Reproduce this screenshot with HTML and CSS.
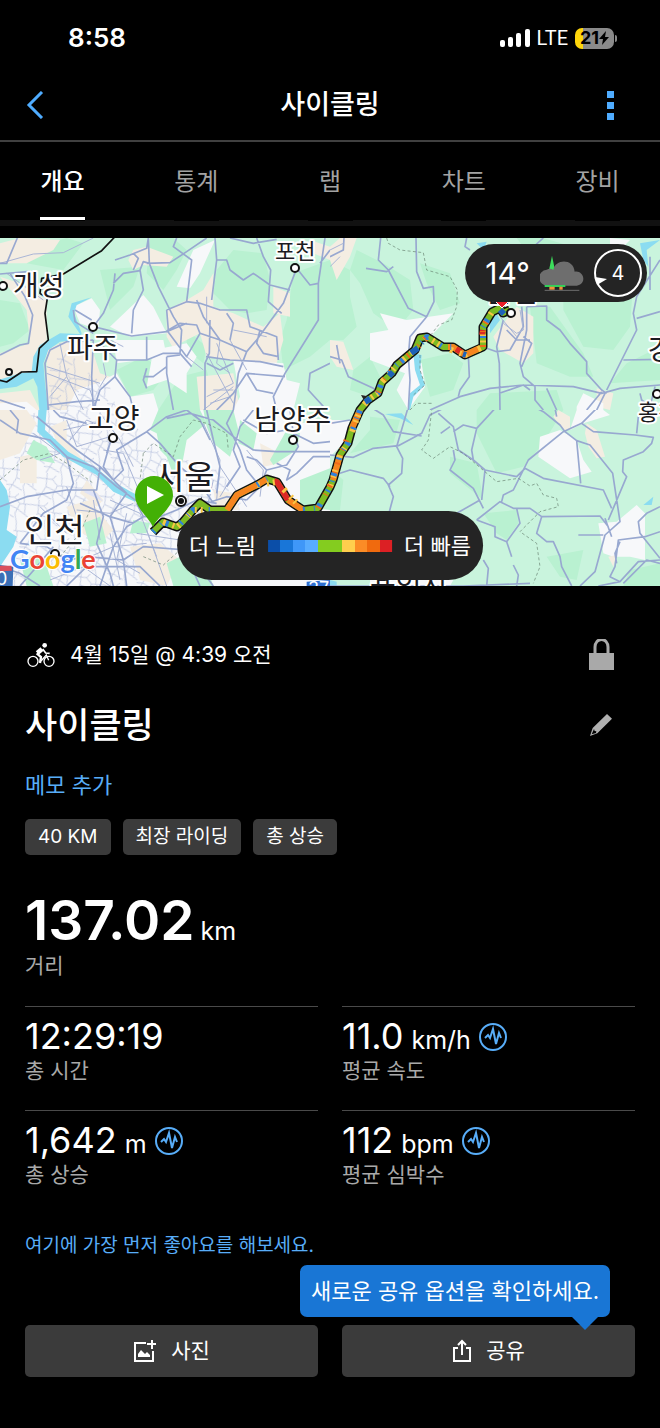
FILE: index.html
```html
<!DOCTYPE html>
<html lang="ko">
<head>
  <meta charset="UTF-8">
  <meta name="viewport" content="width=device-width, initial-scale=1.0">
  <title>사이클링</title>
  <link rel="stylesheet" href="styles.css">
</head>
<body>
  <div class="status-bar">
    <span class="time">8:58</span>
    <div class="status-icons">
      <svg width="30" height="20" viewBox="0 0 30 20" fill="#fff">
        <rect x="0" y="12" width="5" height="7" rx="2"/>
        <rect x="8" y="9" width="5" height="10" rx="2"/>
        <rect x="16" y="5" width="5" height="14" rx="2"/>
        <rect x="25" y="1" width="5" height="18" rx="2"/>
      </svg>
      <span class="network">LTE</span>
      <div class="battery">
        <span>21</span>
        <svg width="10" height="14" viewBox="0 0 10 14"><path d="M7 0L0 8h4L3 14l7-8H6z"/></svg>
      </div>
    </div>
  </div>

  <header class="navbar">
    <button class="icon-btn" aria-label="뒤로">
      <svg width="18" height="28" viewBox="0 0 18 28" fill="none" stroke="#4facff" stroke-width="3"><path d="M16 1L3 14l13 13"/></svg>
    </button>
    <h1>사이클링</h1>
    <button class="icon-btn more" aria-label="더 보기">
      <svg width="8" height="30" viewBox="0 0 8 30" fill="#4facff"><path d="M0 1h7v7H0zM0 12h7v7H0zM0 23h7v7H0z"/></svg>
    </button>
  </header>

  <nav class="tabs">
    <a href="#" class="active">개요</a>
    <a href="#">통계</a>
    <a href="#">랩</a>
    <a href="#">차트</a>
    <a href="#">장비</a>
  </nav>

  <div class="map">
    <svg class="map-canvas" viewBox="0 0 660 348" preserveAspectRatio="xMidYMid slice">
      <defs>
        <pattern id="streets" width="46" height="42" patternUnits="userSpaceOnUse" patternTransform="rotate(17) scale(2)">
          <path d="M0 10L18 7L28 14L46 10M8 0L12 20L6 42M28 14L25 30L31 42M12 20L25 22L46 30M18 7L22 0M36 12L39 26M0 34L9 32L25 36M31 0L34 12" fill="none" stroke="#b4bfdc" stroke-width="1"/>
        </pattern>
      </defs>
      <rect width="660" height="348" fill="#c9f4dd"/>

      <!-- north west -->
      <svg width="330" height="172" viewBox="0 24 990 516">
        <path class="wood" d="M650 120L700 60L790 70L810 150L800 240L740 250L690 240L640 190ZM520 24L560 60L530 120L490 180L440 130L450 24ZM350 420L430 380L500 430L460 480L390 500ZM540 440L620 420L640 500L600 540L475 540ZM880 130L990 90L990 330L930 380L850 420L840 330L860 270ZM0 210L60 220L90 300L40 340L0 350ZM200 24L250 40L190 120L80 100L60 60ZM300 120L420 110L400 170L330 240ZM560 300L620 350L610 400L560 360Z"/>
        <path class="land" d="M0 40L60 24L180 30L160 60L80 100L0 100ZM0 140L60 160L140 210L140 330L110 370L90 440L0 450L0 370L90 340L80 240ZM400 60L440 50L520 80L500 110L430 105L400 120L385 90ZM500 240L560 210L610 180L640 130L640 230L700 250L790 290L840 250L850 330L830 400L740 400L620 380L600 310L540 340L540 390L500 320ZM140 360L200 330L270 340L300 430L330 440L280 540L140 540ZM590 440L700 430L720 540L600 540ZM930 30L990 50L990 90L940 70ZM820 170L870 190L870 260L820 250ZM0 490L90 480L120 540L0 540Z"/>
        <path class="city" d="M580 60L645 30L600 130L570 175L530 170ZM220 230L275 205L300 240L295 300L240 280ZM330 290L430 195L460 230L500 310L390 320ZM460 360L560 340L590 380L560 430L560 490L500 450L440 470ZM700 390L850 400L860 450L900 460L880 540L700 540L720 500ZM340 330L490 330L500 380L350 400ZM290 460L350 430L390 500L460 490L475 540L200 540L230 480ZM0 520L80 515L110 540L0 540Z"/>
        <path d="M150 400L200 360L280 440L330 470L350 540L145 540Z" fill="url(#streets)"/>
        <path class="water" d="M-5 450L60 430L95 425L100 380L120 345L180 310L240 312L205 260L215 220L275 202L230 225L222 250L245 310L240 330L180 335L145 360L130 400L135 460L145 540L118 540L112 470L100 445L50 470L-5 478Z"/>
        <path class="road-minor" d="M0 100L100 72L190 68L280 24M20 130L130 210M80 130L130 180M140 430L270 480L290 540M180 340L200 440L150 500M140 410L300 460M200 440L250 540M650 340L700 460L620 500M640 480L700 480M620 370L700 520M660 330L650 400L690 430M610 540L700 470M630 520L690 500M330 330L370 350M310 400L318 440L300 470M700 300L800 320M690 330L740 420M620 200L620 280M560 380L610 420"/>
        <path class="road" d="M0 100L20 100L52 24M0 132L90 124M0 375L60 345L85 340L98 255L75 200L30 130M345 90L390 75L440 55L445 24M445 24L448 100L475 170L520 260L545 300L540 370L575 410M440 100L510 98L560 65L620 24M448 100L430 95L420 120L430 180L400 240L395 310M400 120L415 85L400 70M345 130L340 180L310 250L280 290M420 122L370 130L340 160M500 240L560 215L600 220L660 240L740 240L750 290L830 320L835 390M560 215L575 90L520 50L530 24M500 240L505 300L540 280L590 285L600 310L660 330L740 365L770 330L850 220L890 115L930 165L955 160L975 24M955 160L955 270L880 390L855 430L820 500L830 540M645 24L650 90L635 210M650 90L680 90L690 120L730 150L760 130L810 165L870 180M770 24L790 80L812 120L805 215L845 250M690 24L760 40L830 28M630 270L628 370L615 400L615 540M618 380L690 390L780 395L850 410M740 365L715 430L700 540M780 300L770 340L790 370L835 380M600 310L560 380L500 300M500 380L540 375M280 290L395 318L500 305L560 280M300 340L350 390L345 440L390 500L400 540M280 330L275 440L280 540M350 390L440 390L490 370L540 370M440 320L440 390M500 380L500 430L520 540M440 415L430 450L440 475M500 410L460 440L430 440M145 540L135 400L150 360L200 335L280 330M145 525L230 515L300 510M345 440L300 480L280 540M620 400L660 420L700 400M650 540L700 490L740 430L855 440M740 430L770 480L820 490M990 400L930 430L925 480L980 540M990 60L960 100M220 240L225 275L280 310M225 240L275 270M590 210L610 260L660 330M680 250L700 280L690 330M0 510L75 535"/>
        <path class="border" d="M-5 450L20 456L65 426L110 425L118 355L145 330L135 250L142 205L120 190L125 145L190 132L305 62L345 20"/>
      </svg>

      <!-- north east -->
      <svg x="330" width="330" height="172" viewBox="0 24 990 516">
        <path class="wood" d="M80 60L160 100L240 150L250 240L200 300L130 250L90 160L60 120ZM270 100L360 130L390 220L330 240L290 160ZM0 90L60 120L60 200L80 290L40 330L0 330ZM270 390L360 370L400 400L370 480L300 500ZM600 230L660 230L760 370L790 440L720 440L620 400ZM560 24L640 24L760 60L700 90L580 50ZM120 380L160 460L120 500L60 480L70 420ZM700 120L910 150L900 290L850 360L760 350L700 240ZM890 400L990 350L990 450L840 460ZM440 540L480 490L680 480L700 540Z"/>
        <path class="land" d="M0 50L30 24L80 24L60 80L20 150L0 90ZM0 330L40 335L70 420L20 410L0 380ZM520 280L560 230L610 260L610 370L580 400L510 360L490 320ZM800 475L850 490L840 540L800 530Z"/>
        <path class="city" d="M120 310L175 300L150 250L230 270L370 250L300 320L270 330L245 370L275 400L285 470L235 540L200 480L225 430L120 390ZM740 530L760 490L820 520L820 540L740 540ZM840 24L900 30L870 60L840 50Z"/>
        <path class="water" d="M250 370L275 375L270 420L285 465L250 500L240 540L235 540L240 490L270 465L255 420ZM480 270L500 250L510 270L480 310ZM930 40L990 30L950 60L955 110L940 90ZM440 40L470 35L460 60Z"/>
        <path class="road" d="M152 24L145 90L175 120L235 235L290 260L240 320L235 380L240 450L235 540M258 24L260 125L280 175L310 170L312 215L290 260M108 115L170 125L190 110M410 24L405 50L420 60M0 80L40 60L42 24M0 380L35 390L55 440L130 475L150 490M20 345L30 400M415 375L418 440L390 480L385 500M300 540L390 500L480 475L580 465L730 470L815 490L870 475L990 465M520 270L500 350L508 400L510 540M575 230L580 290L540 360L500 365L470 355M590 230L590 300L570 400L580 440L615 470L615 510L640 540M590 230L650 228L650 270L690 300L720 340L770 395L770 430L815 480L830 490M830 480L920 300L910 250L920 200L990 90M815 485L770 540M825 490L800 540M880 390L990 388M930 490L935 510L960 530L975 470M920 265L990 245M960 80L960 180M508 490L580 465L600 480M650 475L680 540M580 320L605 340L575 410M530 300L560 330L600 330M600 60L640 24"/>
        <path class="road-minor" d="M570 240L580 300L560 310L520 280M510 260L560 320M0 60L40 40M0 110L30 80"/>
        <path class="trail" d="M170 24L175 40L210 60L280 68L290 120L360 140L382 180L380 230L365 270L325 285L305 312M270 375L270 420L285 465L250 495M240 540L260 520L305 520"/>
      </svg>

      <!-- south west -->
      <svg y="172" width="330" height="176" viewBox="0 30 990 528">
        <path class="city" d="M0 30H880L900 70L990 60V558H0Z"/>
        <path d="M145 30L360 30L500 180L620 180L740 300L560 558L40 558L40 380L0 250L0 60Z" fill="url(#streets)"/>
        <path class="land" d="M0 30L80 30L110 70L60 160L0 180ZM150 80L200 60L200 120L250 180L200 190ZM60 170L110 160L110 250L60 250ZM200 320L270 300L340 390L300 430L230 390ZM640 270L700 280L720 330L650 330ZM780 130L820 150L840 190L790 200ZM390 440L480 430L540 480L500 558L420 540ZM560 30L600 30L590 70L540 60ZM260 240L310 300L290 320L240 280Z"/>
        <path class="wood" d="M475 30L600 30L620 70L560 120L545 200L520 225L500 170L480 150L470 100L450 90ZM610 30L700 30L715 90L690 170L640 130L620 80ZM100 120L140 140L165 190L110 180L80 160ZM250 370L300 350L320 430L270 440ZM900 240L990 205L990 330L900 320ZM860 90L900 100L890 150L820 195L810 180ZM500 490L600 440L640 558L520 558ZM400 360L450 370L440 400L390 400ZM720 60L770 100L760 150L715 130ZM60 480L130 470L160 558L80 558Z"/>
        <path class="water" d="M115 30L140 30L135 90L205 155L290 205L340 245L410 285L405 305L340 275L290 225L190 170L112 95ZM0 240L20 270L30 320L20 390L50 410L40 440L0 500Z"/>
        <path d="M290 280L310 305L250 275L265 270Z" fill="#dfe3f6"/>
        <path class="road-minor" d="M200 60L230 140L330 110M190 90L280 70M210 120L260 60L330 90M100 100L180 160L120 180M300 40L360 120L400 200M310 150L370 160L420 280M230 330L330 340L400 310M280 300L300 420M330 300L420 340L470 470M330 400L360 540M380 340L350 480L420 520M270 470L340 440L440 430M410 400L540 420L560 470M440 390L500 558M610 70L660 180L650 300M660 200L740 320M690 240L660 290M740 150L790 210L780 290M120 320L200 400M200 260L240 380M150 540L250 500L330 558M620 330L640 240"/>
        <path class="road" d="M0 60L60 100L150 120L200 170L280 200L350 260L420 310L480 340M30 30L55 60L50 100M110 50L230 150L300 200L380 280M0 320L80 290L200 270L290 270L300 200M200 170L220 250L200 300L130 340L60 430M160 30L180 50L260 70M330 130L310 200L340 240L370 210L350 150L440 95L500 50L560 30M340 100L320 160M440 95L480 130L540 200L600 250L640 310M500 55L570 40L640 60L700 110L760 150L830 155L990 155M700 30L680 70L720 150L740 210L780 260M620 30L640 120L660 200L650 280M560 30L600 60L630 120M760 30L720 80L700 150L720 200L680 260M730 60L800 100L860 90L940 130L990 125M870 30L880 100L895 140L860 195L800 210L780 260L740 300M830 190L870 210L860 240L890 220L940 170L990 170M280 270L310 350L290 430L330 520L340 558M60 430L140 440L200 480L260 470L370 480L430 440L560 450L640 558M410 310L430 350L380 380L340 440L300 558M430 350L480 350L530 330L590 300L650 310M240 310L330 350L400 370M160 440L110 500L60 558M200 558L260 500L420 500L480 558M380 280L330 350L370 480L380 558M740 300L680 290L620 310M800 210L770 180L740 170M540 410L560 470L600 558M0 500L60 520L120 558"/>
        <path class="trail" d="M0 240L70 180L150 160L200 190L280 250M430 160L460 130L520 170L540 110L580 60L620 70L680 100L685 150M430 160L420 240M180 470L240 400L270 330M430 470L490 495L540 450"/>
        <path d="M0 495L40 500L38 558L0 558Z" fill="#3b6fb6"/>
        <path d="M0 497L34 497L36 512L0 514Z" fill="#d9505c"/>
        <path d="M920 545L990 540L990 558L920 558Z" fill="#2f6fd0"/>
      </svg>

      <!-- south east -->
      <svg x="330" y="172" width="330" height="176" viewBox="0 30 990 528">
        <path class="wood" d="M360 170L440 190L460 300L360 220ZM460 340L560 330L565 370L530 420L500 400ZM650 470L760 450L740 540L690 530ZM700 30L440 30L440 100L500 220L580 200L640 130ZM120 50L210 60L190 130L60 160L120 90ZM0 205L40 240L30 330L0 330ZM900 510L990 490L990 558L880 558Z"/>
        <path class="city" d="M0 60L60 60L40 130L0 170ZM740 30H820L840 45L760 70L720 90ZM630 110L690 90L740 120L760 180L785 215L720 235L625 170ZM805 370L860 365L920 315L945 340L945 480L900 470L850 470L820 460ZM120 540L370 540L360 558L120 558Z"/>
        <path class="land" d="M685 30L720 50L720 90L700 90L670 50ZM770 70L800 90L825 170L800 175L775 140L765 100ZM835 470L860 465L850 500Z"/>
        <path class="water" d="M165 42L215 40L250 75L210 55ZM940 315L970 290L965 315ZM0 540L20 545L20 558L0 558Z"/>
        <path class="road" d="M0 165L70 172L130 145L205 137L275 100L300 45L390 0M0 70L60 60M120 20L160 45L190 95L275 108M235 20L200 140L218 175L215 220L175 255L190 290L178 335M30 220L60 210L160 235L180 260M325 40L370 80L385 150L430 180L465 210L560 230L585 205L640 235L820 270L845 325M370 95L400 75L440 85L500 20M440 85L425 150L430 180M370 150L375 180L360 210L430 265L460 325M465 210L455 300M332 100L360 80M380 340L450 300M440 360L510 305L550 325L600 325L635 350L810 348L835 380M745 405L820 405M515 305L520 285L550 270L595 180L700 95L755 70L805 20M610 20L640 35L690 75L705 95L740 122L780 135L848 220L870 365L825 405L795 515L750 558M740 122L752 250M755 70L790 95L915 105L970 112L965 130L940 155L880 180L878 215L890 230L835 360M920 100L925 50M825 355L845 410M440 360L495 380L495 410L530 425L570 370L560 325M530 425L545 470M635 350L620 400L650 425L670 425L690 470L695 500L725 558M550 495L565 525L560 558M460 480L475 505L470 558M0 558L400 558L600 550M805 558L870 545L925 485L990 480M870 545L840 530L855 500L865 420L945 410L990 395M870 425L855 460L860 490M990 320L950 340L925 365L930 400L990 475M880 550L950 480L990 490M670 0L680 50"/>
        <path class="trail" d="M240 10L250 22L300 10L305 30L295 120L275 150L310 175L360 140L400 160L500 245L565 235L600 258L620 250L640 285L680 295L685 320L630 335L570 395L620 430L630 500L610 550"/>
      </svg>

      <!-- activity track -->
      <g fill="none" stroke-linejoin="round">
        <path stroke="#111" stroke-width="9" d="M153 294L163 284L177 289L183 284L193 272L200 265L210 272L227 272L237 257L257 247L267 241L277 244L288 262L303 272L318 270L330 249L333 242L340 217L348 205L352 190L360 172L368 162L378 155L382 144L392 135L397 127L415 112L420 100L427 99L443 109L453 109L465 117L483 109L483 89L492 74L500 70L503 75L510 72"/>
        <path d="M189 271L202 259L200 269ZM361 157L372 159L366 166Z" fill="#222"/>
        <g stroke-width="6">
          <path stroke="#7dbb24" d="M153 294L163 284L177 289L183 284L193 272L200 265L210 272L227 272L237 257L257 247L267 241L277 244L288 262L303 272L318 270L330 249L333 242L340 217L348 205L352 190L360 172L368 162L378 155L382 144L392 135L397 127L415 112L420 100L427 99L443 109L453 109L465 117L483 109L483 89L492 74L500 70L503 75L510 72"/>
          <path stroke="#f6851f" d="M227 272L237 257L257 247L267 241M288 262L303 272M333 242L340 217M352 190L360 172M448 109L453 109L465 117L480 110"/>
          <path stroke="#dc2a25" d="M274 243L277 244L288 262M482 97L483 92M456 111L461 114"/>
          <path stroke="#f9c545" stroke-dasharray="3 7 2 4 2 12" d="M163 284L177 289L183 284L193 272L210 272M257 247L277 244L303 272M330 249L340 217L348 205L360 172L368 162L378 155L382 144L397 127L415 112L427 99L443 109L465 117L483 109L483 89L492 74"/>
          <path stroke="#ef6a1a" stroke-dasharray="2 13 1 8" d="M318 270L333 242L340 217L352 190M378 155L382 144L397 127L415 112L427 99M483 109L483 89L492 74"/>
          <path stroke="#2f80dc" stroke-dasharray="2 9 1 5 3 14" d="M153 294L163 284L177 289L193 272L210 272M257 247L267 241M303 272L318 270L330 249L340 217L348 205L360 172L368 162L378 155L382 144L397 127L415 112L427 99L443 109L453 109M483 100L483 89L492 74"/>
          <path stroke="#1e62b8" d="M365 164L370 161M389 138L393 134M411 115L418 110M463 116L466 117M500 72L504 76"/>
        </g>
      </g>

      <g class="place-dots">
        <circle cx="295" cy="30" r="4"/><circle cx="3" cy="48" r="4"/>
        <circle cx="93" cy="89" r="4"/><circle cx="9" cy="134" r="3"/>
        <circle cx="113" cy="200" r="4"/><circle cx="293" cy="202" r="4"/>
        <circle cx="55" cy="316" r="4"/><circle cx="511" cy="75" r="4"/>
        <circle cx="657" cy="156" r="4"/><circle cx="181" cy="263" r="5"/>
      </g>
      <circle cx="181" cy="263" r="3" fill="#111"/>
      <g class="places">
        <text class="sm" x="275" y="21">포천</text>
        <text x="13" y="58">개성</text>
        <text x="67" y="120">파주</text>
        <text x="88" y="191">고양</text>
        <text x="254" y="192">남양주</text>
        <text class="lg" x="154" y="251">서울</text>
        <text class="lg" x="24" y="304">인천</text>
        <text x="486" y="64">춘천</text>
        <text x="648" y="122">강릉</text>
        <text class="sm" x="638" y="182">홍천</text>
        <text x="370" y="357">용인시</text>
      </g>
      <text class="shield" x="-4" y="347">0</text>
      <text class="shield" x="308" y="357">37</text>

      <!-- start and end pins -->
      <path d="M153 289C148 278 135 270 135 257A19 19 0 0 1 173 257C173 270 158 278 153 289Z" fill="#43b005"/>
      <path d="M147 248L164 257L147 266Z" fill="#fff"/>
      <path d="M495 63H509L502 70Z" fill="#e8202a" stroke="#fff"/>

      <text class="google" x="10" y="331"><tspan fill="#4285f4">G</tspan><tspan fill="#ea4335">o</tspan><tspan fill="#fbbc05">o</tspan><tspan fill="#4285f4">g</tspan><tspan fill="#34a853">l</tspan><tspan fill="#ea4335">e</tspan></text>
    </svg>

    <div class="weather">
      <span class="temp">14°</span>
      <svg width="44" height="36" viewBox="0 0 132 108">
        <path d="M26 50L36 2L46 50Z" fill="#3ddc5c"/>
        <path d="M24 92a24 24 0 0 1-4-48c8-4 15-3 20 1 5-33 60-36 64 5 14-3 26 8 26 21 0 14-12 21-24 21z" fill="#6e6e6e"/>
        <path d="M14 90h62v6H14z" fill="#30d158"/>
        <path d="M28 95h16v9H28zM58 95h10v9H58z" fill="#f0913a"/>
        <path d="M14 106H118" stroke="#6e6e6e" stroke-width="3"/>
      </svg>
      <div class="wind">
        <svg width="48" height="48" viewBox="0 0 48 48">
          <circle cx="24" cy="24" r="23" fill="none" stroke="#fff" stroke-width="2"/>
          <path d="M1 28L13 30L3 36Z" fill="#fff"/>
        </svg>
        <span>4</span>
      </div>
    </div>

    <div class="legend">
      <span>더 느림</span>
      <div class="scale"></div>
      <span>더 빠름</span>
    </div>
  </div>

  <main>
    <div class="meta">
      <svg width="28" height="24" viewBox="80 66 84 72" fill="none" stroke="#fff">
        <circle cx="98" cy="121" r="15" stroke-width="4"/>
        <circle cx="146" cy="121" r="15" stroke-width="4"/>
        <circle cx="133" cy="73" r="7" fill="#fff" stroke="none"/>
        <path d="M125 84L111 96" stroke-width="14"/>
        <path d="M109 97L122 108L119 126" stroke-width="7"/>
        <path d="M127 84L136 96L148 97" stroke-width="5"/>
        <path d="M122 120L138 102L145 118" stroke-width="4"/>
      </svg>
      <span class="date">4월 15일 @ 4:39 오전</span>
      <button class="icon-btn" aria-label="공개 범위">
        <svg width="25" height="32" viewBox="0 0 25 32">
          <rect y="14" width="25" height="17" fill="#a9a9a9"/>
          <path d="M6 15V8a6 7 0 0 1 13 0v7" fill="none" stroke="#a9a9a9" stroke-width="3"/>
        </svg>
      </button>
    </div>

    <div class="title">
      <h2>사이클링</h2>
      <button class="icon-btn" aria-label="이름 편집">
        <svg width="22" height="22" viewBox="0 0 66 66">
          <path d="M51 0L66 14L22 58L0 66L8 42ZM12 45L5 61L18 57L19 52L14 51Z" fill="#b0b0b0" fill-rule="evenodd"/>
        </svg>
      </button>
    </div>

    <a href="#" class="note">메모 추가</a>

    <div class="chips">
      <span>40 KM</span>
      <span>최장 라이딩</span>
      <span>총 상승</span>
    </div>

    <div class="distance">
      <div class="value">137.02 <small>km</small></div>
      <div class="label">거리</div>
    </div>

    <div class="stats">
      <div class="stat">
        <div class="value">12:29:19</div>
        <div class="label">총 시간</div>
      </div>
      <div class="stat">
        <div class="value">11.0 <small>km/h</small>
          <svg class="pulse" viewBox="0 0 28 28"><circle cx="14" cy="14" r="13"/><path d="M6 15l3-3 2 3 3-9 3 15 3-11 2 5"/></svg>
        </div>
        <div class="label">평균 속도</div>
      </div>
      <div class="stat">
        <div class="value">1,642 <small>m</small>
          <svg class="pulse" viewBox="0 0 28 28"><circle cx="14" cy="14" r="13"/><path d="M6 15l3-3 2 3 3-9 3 15 3-11 2 5"/></svg>
        </div>
        <div class="label">총 상승</div>
      </div>
      <div class="stat">
        <div class="value">112 <small>bpm</small>
          <svg class="pulse" viewBox="0 0 28 28"><circle cx="14" cy="14" r="13"/><path d="M6 15l3-3 2 3 3-9 3 15 3-11 2 5"/></svg>
        </div>
        <div class="label">평균 심박수</div>
      </div>
    </div>

    <a href="#" class="like">여기에 가장 먼저 좋아요를 해보세요.</a>

    <div class="actions">
      <button>
        <svg width="24" height="24" viewBox="0 0 24 24" fill="none" stroke="#fff" stroke-width="2">
          <path d="M13 4H2v18h18V12"/>
          <path d="M19 1v9M14 5h9" stroke-width="2"/>
          <path d="M5 18v-3l3-4 4 4 2-2 3 3v2z" fill="#fff" stroke="none"/>
        </svg>
        사진
      </button>
      <button>
        <svg width="20" height="24" viewBox="0 0 20 24" fill="none" stroke="#fff" stroke-width="2">
          <path d="M6 9H2v13h16V9h-4M10 16V3M6 6l4-4 4 4"/>
        </svg>
        공유
      </button>
      <div class="tooltip">새로운 공유 옵션을 확인하세요.</div>
    </div>
  </main>
</body>
</html>
```
FILE: styles.css
```css
* {
  box-sizing: border-box;
}
body {
  margin: 0;
  background-color: #000;
  color: #fff;
  font-family: Inter, "Noto Sans CJK KR", sans-serif;
  font-size: 21px;
  line-height: 24px;
}
a {
  text-decoration: none;
}
button {
  font: inherit;
  color: inherit;
  border: 0;
  cursor: pointer;
}
svg {
  display: block;
}
.icon-btn {
  background: none;
  padding: 0;
}

/* status bar */
.status-bar {
  display: flex;
  justify-content: space-between;
  align-items: center;
  height: 68px;
  padding: 8px 46px 0 68px;
}
.time {
  font-size: 26px;
  font-weight: 600;
}
.status-icons {
  display: flex;
  align-items: center;
  gap: 7px;
}
.network {
  font-family: Roboto, sans-serif;
  font-size: 20px;
}
.battery {
  position: relative;
  display: flex;
  align-items: center;
  justify-content: center;
  width: 39px;
  height: 21px;
  border-radius: 7px;
  background: linear-gradient(to right, #ffd60a 21%, #8a8a8a 21%);
  color: #000;
  font-size: 18px;
  font-weight: 700;
}
.battery::after {
  content: "";
  position: absolute;
  right: -3px;
  top: 7px;
  width: 2px;
  height: 7px;
  border-radius: 0 2px 2px 0;
  background-color: #8a8a8a;
}

/* header */
.navbar {
  display: grid;
  grid-template-columns: 1fr auto 1fr;
  align-items: center;
  height: 74px;
  padding: 2px 26px 0;
  border-bottom: 2px solid #404040;
}
.navbar .more {
  justify-self: end;
  margin-right: 19px;
}
.navbar h1 {
  margin: 0;
  font-size: 27px;
  font-weight: 500;
  line-height: 36px;
}
.tabs {
  display: flex;
  justify-content: space-between;
  height: 84px;
  padding: 0 40px;
  border-bottom: 6px solid #111;
}
.tabs a {
  min-width: 45px;
  height: 78px;
  text-align: center;
  font-size: 24px;
  line-height: 80px;
  color: #a3a3a3;
  box-shadow: 0 1px 0 #000;
}
.tabs a.active {
  color: #fff;
  font-weight: 500;
  border-bottom: 3px solid #fff;
}

/* map */
.map {
  position: relative;
  margin-top: 12px;
}
.map-canvas {
  width: 100%;
  height: 348px;
}
.wood {
  fill: #b9f1d1;
}
.land {
  fill: #f4ede2;
}
.city {
  fill: #f7f8fa;
}
.water {
  fill: #8bdcf1;
}
.road,
.road-minor,
.border,
.trail {
  fill: none;
  stroke: #98a8d0;
  stroke-width: 5;
  stroke-linejoin: round;
}
.road-minor {
  stroke: #a9b5d6;
  stroke-width: 3;
}
.border {
  stroke: #111;
}
.trail {
  stroke: #67806f;
  stroke-width: 2;
  stroke-dasharray: 9 7;
}
.place-dots {
  fill: #fff;
  stroke: #111;
  stroke-width: 2;
}
.places,
.google {
  stroke: #fff;
  stroke-width: 4px;
  stroke-linejoin: round;
  paint-order: stroke;
}
.places {
  fill: #1c1c22;
  font-size: 28px;
}
.places .sm {
  font-size: 22px;
}
.places .lg {
  font-size: 33px;
}
.google {
  font-family: Lato, sans-serif;
  font-size: 27px;
  font-weight: 700;
  stroke-width: 2px;
}
.shield {
  fill: #fff;
  font-size: 18px;
}
.weather,
.legend {
  position: absolute;
  display: flex;
  align-items: center;
  background-color: #242424;
}
.weather {
  top: 6px;
  right: 13px;
  gap: 10px;
  height: 58px;
  padding: 0 5px 0 20px;
  border-radius: 29px;
}
.temp {
  font-size: 30px;
}
.wind {
  position: relative;
}
.wind span {
  position: absolute;
  inset: 0;
  text-align: center;
  font-size: 20px;
  line-height: 48px;
}
.legend {
  bottom: 6px;
  left: 50%;
  transform: translateX(-50%);
  gap: 12px;
  height: 69px;
  padding: 0 12px;
  border-radius: 35px;
  font-size: 22px;
  white-space: nowrap;
}
.scale {
  width: 124px;
  height: 12px;
  background: linear-gradient(to right,
    #0b4ea8 10%, #1976d8 10% 20%, #3f97f8 20% 30%, #58acff 30% 40%,
    #84cc1f 40% 60%, #ffce4d 60% 70%, #fb8c26 70% 80%, #f06a0e 80% 90%, #dc2024 90%);
}

/* details */
main {
  padding: 53px 25px 51px;
}
.meta,
.title {
  display: flex;
  align-items: center;
}
.meta {
  height: 32px;
  padding: 0 21px 0 2px;
}
.date {
  flex: 1;
  margin-left: 15px;
}
.title {
  justify-content: space-between;
  height: 48px;
  margin-top: 30px;
  padding-right: 23px;
}
.title h2 {
  margin: 0;
  font-size: 35px;
  font-weight: 500;
  line-height: 48px;
}
.note,
.like {
  display: block;
  color: #58adf8;
}
.note {
  margin-top: 24px;
  font-size: 22px;
}
.chips {
  display: flex;
  gap: 12px;
  margin-top: 22px;
}
.chips span {
  height: 36px;
  padding: 0 13px;
  border-radius: 5px;
  background-color: #3b3b3b;
  font-size: 19px;
  line-height: 36px;
}
.value small {
  font-size: 25px;
  line-height: 24px;
}
.label {
  color: #a9a9a9;
}
.distance {
  margin-top: 31px;
}
.distance .value {
  font-size: 55px;
  font-weight: 600;
  line-height: 68px;
}
.distance small {
  margin-left: -8px;
  font-weight: 400;
}
.stats {
  display: grid;
  grid-template-columns: 1fr 1fr;
  column-gap: 24px;
  margin-top: 28px;
}
.stat {
  padding: 7px 0 27px;
  border-top: 1px solid #4a4a4a;
}
.stat .value {
  display: flex;
  align-items: baseline;
  gap: 8px;
  height: 45px;
  font-size: 36px;
  line-height: 44px;
}
.pulse {
  width: 28px;
  height: 28px;
  align-self: center;
  fill: none;
  stroke: #58adf8;
  stroke-width: 2;
}
.like {
  margin-top: 20px;
  font-size: 19px;
}
.actions {
  position: relative;
  display: grid;
  grid-template-columns: 1fr 1fr;
  gap: 24px;
  margin-top: 67px;
}
.actions button {
  display: flex;
  justify-content: center;
  align-items: center;
  gap: 14px;
  height: 52px;
  border-radius: 5px;
  background-color: #3b3b3b;
}
.tooltip {
  position: absolute;
  right: 25px;
  bottom: 60px;
  padding: 14px 11px;
  border-radius: 7px;
  background-color: #1976d5;
  font-size: 22px;
}
.tooltip::after {
  content: "";
  position: absolute;
  top: 100%;
  right: 12px;
  border: 13px solid transparent;
  border-top-color: #1976d5;
  border-bottom: 0;
}
```
